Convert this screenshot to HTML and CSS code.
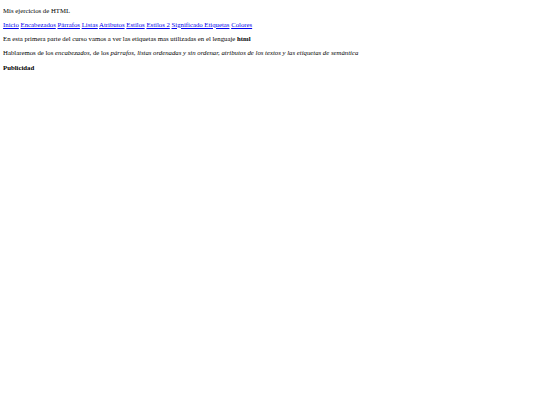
FILE: index.html
```html
<!DOCTYPE html>
<html lang="es">
<head>
<meta charset="utf-8">
<title>Mis ejercicios de HTML</title>
<link rel="stylesheet" href="styles.css">
</head>
<body>
<div class="title">Mis ejercicios de HTML</div>
<p class="nav"><a href="#">Inicio</a> <a href="#">Encabezados</a> <a href="#">Párrafos</a> <a href="#">Listas</a> <a href="#">Atributos</a> <a href="#">Estilos</a> <a href="#">Estilos 2</a> <a href="#">Significado Etiquetas</a> <a href="#">Colores</a></p>
<p>En esta primera parte del curso vamos a ver las etiquetas mas utilizadas en el lenguaje <strong>html</strong></p>
<p>Hablaremos de los <em>encabezados</em>, de los <em>párrafos, listas ordenadas y sin ordenar, atributos de los textos y las etiquetas de semántica</em></p>
<p><strong>Publicidad</strong></p>
</body>
</html>
```
FILE: styles.css
```css
html, body {
  background: #ffffff;
}
body {
  margin: 6.5px 3.1px;
  font-family: "Liberation Serif", "Times New Roman", serif;
  font-size: 6.75px;
  line-height: 8px;
  color: #000000;
}
.title {
  margin: 0;
}
p {
  margin: 6.3px 0 0 0;
}
a {
  color: #0000ee;
  text-decoration: underline;
}
```
